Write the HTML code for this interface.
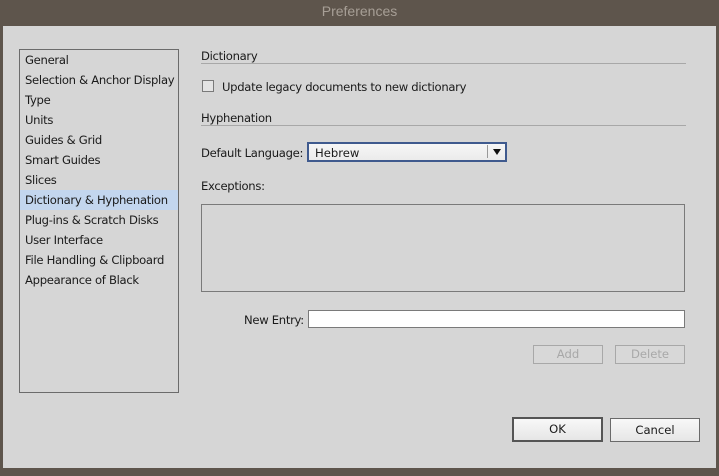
<!DOCTYPE html>
<html><head><meta charset="utf-8"><style>
*{margin:0;padding:0;box-sizing:border-box}
body{width:719px;height:476px;background:#5e554c;font-family:"DejaVu Sans","Liberation Sans",sans-serif;font-size:11.6px;color:#1a1a1a;position:relative;overflow:hidden}
.t{position:absolute}
#title{left:0;top:0;width:719px;height:24px;text-align:center;line-height:22px;color:#a79f96;font-size:14px;font-family:"Liberation Sans",sans-serif}
#dlg{left:3px;top:26px;width:713px;height:442px;background:#d6d6d6}
#list{left:19px;top:49px;width:160px;height:344px;border:1px solid #6b6b6b;background:#d6d6d6}
.li{position:absolute;left:0;width:158px;height:20px;line-height:20px;padding-left:5px;white-space:nowrap;letter-spacing:-0.3px}
.sel{background:#c3d6ee}
.line{height:1px;background:#a8a8a8}
.box{border:1px solid #7a7a7a}
.btn{position:absolute;text-align:center;border:1px solid #8a8a8a;background:#ececec}
</style></head><body>
<div class="t" id="title">Preferences</div>
<div class="t" id="dlg"></div>
<div class="t" id="list">
<div class="li" style="top:0">General</div>
<div class="li" style="top:20px">Selection &amp; Anchor Display</div>
<div class="li" style="top:40px">Type</div>
<div class="li" style="top:60px">Units</div>
<div class="li" style="top:80px">Guides &amp; Grid</div>
<div class="li" style="top:100px">Smart Guides</div>
<div class="li" style="top:120px">Slices</div>
<div class="li sel" style="top:140px">Dictionary &amp; Hyphenation</div>
<div class="li" style="top:160px">Plug-ins &amp; Scratch Disks</div>
<div class="li" style="top:180px">User Interface</div>
<div class="li" style="top:200px">File Handling &amp; Clipboard</div>
<div class="li" style="top:220px">Appearance of Black</div>
</div>
<div class="t" style="left:201px;top:49px;letter-spacing:-0.3px">Dictionary</div>
<div class="t line" style="left:201px;top:63px;width:485px"></div>
<div class="t" style="left:202px;top:80px;width:12px;height:12px;border:1px solid #7a7a7a;background:#e4e4e4"></div>
<div class="t" style="left:222px;top:80px;letter-spacing:-0.3px">Update legacy documents to new dictionary</div>
<div class="t" style="left:201px;top:111px;letter-spacing:-0.3px">Hyphenation</div>
<div class="t line" style="left:201px;top:125px;width:485px"></div>
<div class="t" style="left:201px;top:146px;letter-spacing:-0.3px">Default Language:</div>
<div class="t" style="left:307px;top:142px;width:200px;height:20px;border:2px solid #3f5a8e;background:linear-gradient(#f6f6f6,#ebebeb)"></div>
<div class="t" style="left:315px;top:146px">Hebrew</div>
<div class="t" style="left:487px;top:145px;width:1px;height:13px;background:#999"></div>
<div class="t" style="left:493px;top:149px;width:0;height:0;border-left:4px solid transparent;border-right:4px solid transparent;border-top:6px solid #111"></div>
<div class="t" style="left:201px;top:179px;letter-spacing:-0.3px">Exceptions:</div>
<div class="t box" style="left:201px;top:204px;width:484px;height:88px"></div>
<div class="t" style="left:244px;top:313px;letter-spacing:-0.3px">New Entry:</div>
<div class="t" style="left:308px;top:310px;width:377px;height:18px;border:1px solid #7a7a7a;background:#fff"></div>
<div class="btn" style="left:533px;top:345px;width:70px;height:19px;line-height:17px;color:#a8a8a8;background:#d8d8d8;border-color:#a8a8a8">Add</div>
<div class="btn" style="left:615px;top:345px;width:70px;height:19px;line-height:17px;color:#a8a8a8;background:#d8d8d8;border-color:#a8a8a8">Delete</div>
<div class="btn" style="left:512px;top:417px;width:91px;height:25px;line-height:21px;border:2px solid #555;background:linear-gradient(#f8f8f8,#e6e6e6)">OK</div>
<div class="btn" style="left:610px;top:418px;width:90px;height:24px;line-height:22px;border-color:#6a6a6a;background:linear-gradient(#f8f8f8,#e6e6e6)">Cancel</div>
</body></html>
